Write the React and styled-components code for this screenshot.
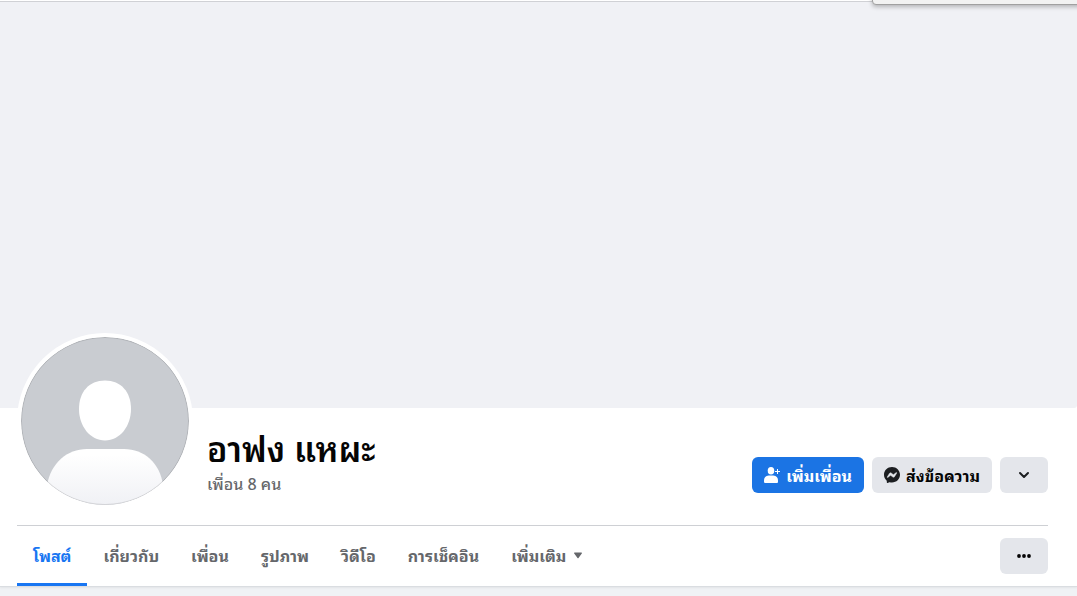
import { useState } from 'react'
import styled, { createGlobalStyle } from 'styled-components'

const GlobalStyle = createGlobalStyle`
	* {
		box-sizing: border-box;
	}

	body {
		margin: 0;
		background-color: #f0f2f5;
		color: #050505;
		font-family: 'Noto Sans Thai Looped', 'Loma', 'Noto Sans', sans-serif;
	}

	button {
		font-family: inherit;
		cursor: pointer;
	}
`

const Page = styled.div`
	min-height: 100vh;
	position: relative;
	overflow: hidden;
`

const Popup = styled.div`
	position: absolute;
	top: -10px;
	right: -10px;
	width: 215px;
	height: 15px;
	background-color: #f2f2f2;
	border: 1px solid #a0a0a0;
	border-radius: 4px;
	box-shadow: 0 2px 4px rgba(0, 0, 0, 0.25);
`

const Header = styled.header`
	background-color: #fff;
	border-top: 1px solid #fff;
	border-bottom: 1px solid #dadde1;
	box-shadow: 0 1px 2px rgba(0, 0, 0, 0.06);
`

const Cover = styled.div`
	height: 407px;
	background-color: #f0f1f5;
	border-top: 1px solid #d0d1d5;
	border-bottom-right-radius: 3px;
`

const Content = styled.div`
	padding: 0 29px 0 17px;
`

const Profile = styled.section`
	display: flex;
	align-items: flex-end;
	gap: 14px;
	margin-top: -75px;
	padding-bottom: 16px;
	border-bottom: 1px solid #ced0d4;
`

const Avatar = styled.svg`
	display: block;
	flex: none;
	width: 176px;
	height: 176px;
	border: 4px solid #fff;
	border-radius: 50%;
	background-color: #fff;
`

const Info = styled.div`
	flex: 1;
	padding-bottom: 14px;
`

const Name = styled.h1`
	margin: 0;
	font-size: 34px;
	line-height: 48px;
	font-weight: 600;
	color: #050505;
`

const Friends = styled.a`
	display: block;
	font-size: 16px;
	line-height: 24px;
	font-weight: 500;
	color: #65676b;
	text-decoration: none;
`

const Actions = styled.div`
	display: flex;
	gap: 8px;
	padding-bottom: 16px;
`

const Button = styled.button`
	display: flex;
	align-items: center;
	justify-content: center;
	gap: 6px;
	height: 36px;
	min-width: 48px;
	padding: 0 12px;
	border: none;
	border-radius: 6px;
	font-size: 16px;
	line-height: 24px;
	font-weight: 700;
	white-space: nowrap;
	color: ${({ $primary }) => ($primary ? '#fff' : '#050505')};
	background-color: ${({ $primary }) => ($primary ? '#1b74e4' : '#e4e6eb')};
`

const Nav = styled.nav`
	display: flex;
	align-items: center;
	justify-content: space-between;
	height: 60px;
`

const Tabs = styled.div`
	display: flex;
	height: 100%;
`

const Tab = styled.button`
	display: flex;
	align-items: center;
	gap: 8px;
	padding: 1px 16px 0;
	border: none;
	border-bottom: 3px solid ${({ $active }) => ($active ? '#1876f2' : 'transparent')};
	background: none;
	font-size: 16px;
	line-height: 24px;
	font-weight: 700;
	white-space: nowrap;
	color: ${({ $active }) => ($active ? '#1876f2' : '#65676b')};
`

const TABS = ['โพสต์', 'เกี่ยวกับ', 'เพื่อน', 'รูปภาพ', 'วิดีโอ', 'การเช็คอิน']

function DefaultAvatar() {
	return (
		<Avatar viewBox='0 0 168 168' role='img' aria-label='อาฟง แหผะ'>
			<defs>
				<clipPath id='circle'>
					<circle cx='84' cy='84' r='84' />
				</clipPath>
				<linearGradient id='body' x1='0' y1='0' x2='0' y2='1'>
					<stop offset='0.1' stopColor='#fff' />
					<stop offset='1' stopColor='#f0f1f5' />
				</linearGradient>
			</defs>
			<g clipPath='url(#circle)'>
				<rect width='168' height='168' fill='#c9ccd1' />
				<path
					d='M84 43.5c16 0 26 11.5 26 28.5 0 17-11 31.500-26 31.500S58 89 58 72c0-17 10-28.500 26-28.500z'
					fill='#fff'
				/>
				<path d='M66 112h37c20 0 36 14 39 36v20H26v-20c4-22 20-36 40-36z' fill='url(#body)' />
			</g>
			<circle cx='84' cy='84' r='83.5' fill='none' stroke='#000' strokeOpacity='0.12' />
		</Avatar>
	)
}

function AddFriendIcon() {
	return (
		<svg width='16' height='16' viewBox='0 0 16 16' fill='currentColor' aria-hidden='true'>
			<ellipse cx='7' cy='3.800' rx='3.300' ry='3.800' />
			<path d='M4.600 8.500h4.800c3 0 4.600 2.200 4.600 4.700v1.300c0 1-.5 1.500-1.500 1.500h-11C.5 16 0 15.500 0 14.500v-1.300c0-2.500 1.600-4.700 4.600-4.700z' />
			<path d='M13 2h1v2h2v1h-2v2h-1V5h-2V4h2z' />
		</svg>
	)
}

function MessengerIcon() {
	return (
		<svg width='16' height='16' viewBox='0 0 16 16' aria-hidden='true'>
			<path
				d='M8 0C3.500 0 0 3.300 0 7.700c0 2.300 1 4.300 2.500 5.700.2.100.3.300.3.500v1.400c0 .5.500.8.900.6l1.600-.7c.1-.1.300-.1.400 0 .7.200 1.500.3 2.300.3 4.500 0 8-3.300 8-7.700S12.500 0 8 0z'
				fill='#1c1e21'
			/>
			<path
				d='M3.200 10l2.300-3.700c.4-.6 1.200-.7 1.700-.3l1.900 1.400c.2.100.4.100.6 0l2.500-1.900c.3-.2.800.2.600.5l-2.300 3.700c-.4.600-1.200.7-1.700.3L6.900 8.600c-.2-.1-.4-.1-.6 0l-2.500 1.900c-.4.200-.8-.2-.6-.5z'
				fill='#e4e6eb'
				stroke='#e4e6eb'
				strokeWidth='0.400'
			/>
		</svg>
	)
}

function ChevronIcon() {
	return (
		<svg width='16' height='16' viewBox='0 0 16 16' aria-hidden='true'>
			<path
				d='M4 6l4 4 4-4'
				fill='none'
				stroke='#1c1e21'
				strokeWidth='2'
				strokeLinecap='round'
				strokeLinejoin='round'
			/>
		</svg>
	)
}

function DotsIcon() {
	return (
		<svg width='16' height='16' viewBox='0 0 16 16' fill='#050505' aria-hidden='true'>
			<circle cx='3' cy='8' r='1.900' />
			<circle cx='8' cy='8' r='1.900' />
			<circle cx='13' cy='8' r='1.900' />
		</svg>
	)
}

function CaretIcon() {
	return (
		<svg width='8' height='8' viewBox='0 0 8 8' fill='currentColor' aria-hidden='true'>
			<path d='M.6 1.500h6.800c.5 0 .8.600.4 1L4.500 7.100c-.2.300-.7.300-1 0L.2 2.500c-.4-.4-.1-1 .4-1z' />
		</svg>
	)
}

export default function App() {
	const [active, setActive] = useState('โพสต์')

	return (
		<Page>
			<GlobalStyle />
			<Header>
				<Cover />
				<Content>
					<Profile>
						<DefaultAvatar />
						<Info>
							<Name>อาฟง แหผะ</Name>
							<Friends href='#friends'>เพื่อน 8 คน</Friends>
						</Info>
						<Actions>
							<Button $primary>
								<AddFriendIcon />
								เพิ่มเพื่อน
							</Button>
							<Button>
								<MessengerIcon />
								ส่งข้อความ
							</Button>
							<Button aria-label='ดูตัวเลือก'>
								<ChevronIcon />
							</Button>
						</Actions>
					</Profile>
					<Nav>
						<Tabs>
							{TABS.map(tab => (
								<Tab key={tab} $active={tab === active} onClick={() => setActive(tab)}>
									{tab}
								</Tab>
							))}
							<Tab>
								เพิ่มเติม
								<CaretIcon />
							</Tab>
						</Tabs>
						<Button aria-label='การดำเนินการ'>
							<DotsIcon />
						</Button>
					</Nav>
				</Content>
			</Header>
			<Popup />
		</Page>
	)
}
